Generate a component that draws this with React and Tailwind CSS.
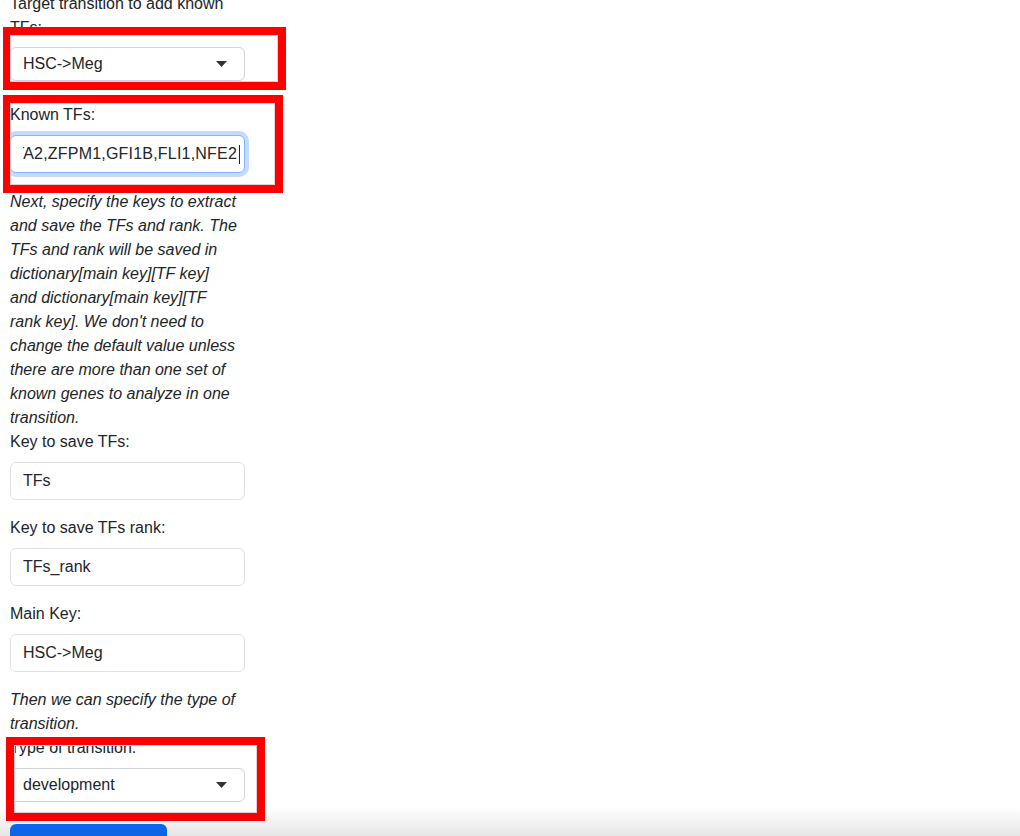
import { useEffect, useRef } from "react";

const font = { fontFamily: '"Liberation Sans", Arial, sans-serif' };

const NOTE_1 = [
  "Next, specify the keys to extract",
  "and save the TFs and rank. The",
  "TFs and rank will be saved in",
  "dictionary[main key][TF key]",
  "and dictionary[main key][TF",
  "rank key]. We don't need to",
  "change the default value unless",
  "there are more than one set of",
  "known genes to analyze in one",
  "transition.",
];

const NOTE_2 = ["Then we can specify the type of", "transition."];

function Label({ children }) {
  return <label className="mb-2 block text-base leading-6 text-[#212529]">{children}</label>;
}

function TextInput({ value }) {
  return (
    <input
      readOnly
      value={value}
      className="mb-4 block h-[38px] w-[235px] rounded-md border border-[#dee2e6] bg-white px-3 text-base text-[#212529] outline-none"
      style={font}
    />
  );
}

function FakeSelect({ value, className = "" }) {
  return (
    <div className={`relative flex h-[34px] w-[235px] items-center rounded-md border border-[#d0d4d8] bg-white pl-3 text-base text-[#212529] ${className}`}>
      <span>{value}</span>
      <svg className="absolute right-[17px] top-1/2 -translate-y-1/2" width="11" height="6" viewBox="0 0 11 6">
        <path d="M0 0h11L5.5 6z" fill="#333" />
      </svg>
    </div>
  );
}

function Note({ lines }) {
  return (
    <p className="text-base italic leading-6 text-[#212529]">
      {lines.map((line) => (
        <span key={line} className="block whitespace-nowrap">{line}</span>
      ))}
    </p>
  );
}

export default function App() {
  const tfRef = useRef(null);

  useEffect(() => {
    if (tfRef.current) tfRef.current.scrollLeft = tfRef.current.scrollWidth;
  }, []);

  return (
    <div className="relative h-[836px] w-[1020px] overflow-hidden bg-white" style={font}>
      <div className="ml-[10px] mt-[-8px] w-[240px]">
        <label className="mb-[7px] block text-base leading-6 text-[#212529]">
          Target transition to add known
          <br />
          TFs:
        </label>
        <FakeSelect value="HSC->Meg" className="mb-[22px]" />

        <Label>Known TFs:</Label>
        {/* focused input, scrolled to the caret at the end */}
        <div className="mb-[17px] flex h-[38px] w-[235px] items-center rounded-md border border-[#86b7fe] bg-white pl-3 pr-[4px] text-base text-[#212529] shadow-[0_0_0_4px_rgba(13,110,253,0.25)]">
          <div ref={tfRef} className="flex min-w-0 flex-1 items-center justify-end overflow-hidden whitespace-nowrap">
            <span className="tracking-[0.2px]">GATA1,GATA2,ZFPM1,GFI1B,FLI1,NFE2</span>
            <span className="ml-[2px] h-[19px] w-px shrink-0 bg-[#212529]" />
          </div>
        </div>

        <Note lines={NOTE_1} />

        <Label>Key to save TFs:</Label>
        <TextInput value="TFs" />

        <Label>Key to save TFs rank:</Label>
        <TextInput value="TFs_rank" />

        <Label>Main Key:</Label>
        <TextInput value="HSC->Meg" />

        <Note lines={NOTE_2} />

        <Label>Type of transition:</Label>
        <FakeSelect value="development" className="mb-[22px]" />

        <button className="h-[38px] w-[157px] whitespace-nowrap rounded-md bg-[#0d6efd] px-3 text-base leading-6 text-white">
          Add known TFs
        </button>
      </div>

      {/* annotation boxes */}
      <div className="pointer-events-none absolute left-[3px] top-[27px] h-[63px] w-[283px] border-[8px] border-l-[7px] border-[#ff0000] shadow-[inset_0_0_0_1px_#e9cfcf]" />
      <div className="pointer-events-none absolute left-[3px] top-[95px] h-[98px] w-[280px] border-[8px] border-l-[7px] border-[#ff0000] shadow-[inset_0_0_0_1px_#e9cfcf]" />
      <div className="pointer-events-none absolute left-[6px] top-[737px] h-[84px] w-[259px] border-[8px] border-[#ff0000] shadow-[inset_0_0_0_1px_#e9cfcf]" />

      {/* bottom window shade */}
      <div className="pointer-events-none absolute bottom-0 left-0 h-[30px] w-full bg-gradient-to-b from-transparent to-black/10" />
    </div>
  );
}
